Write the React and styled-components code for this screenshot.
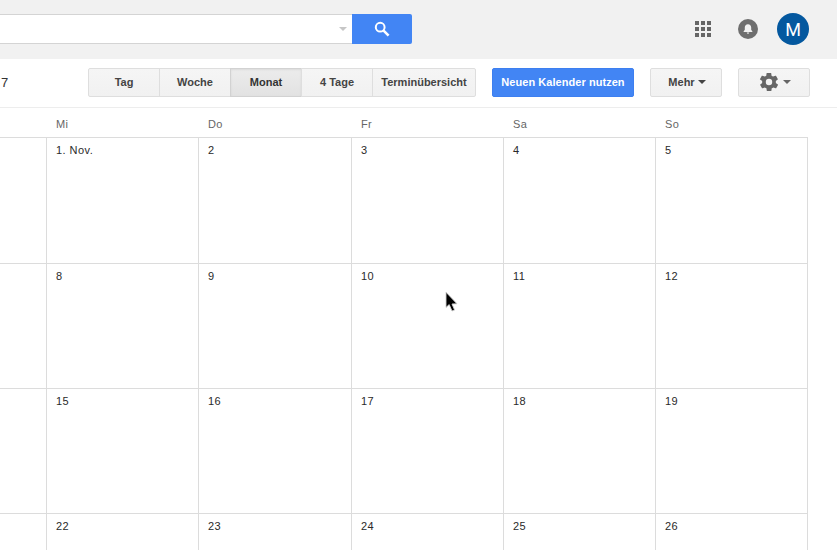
import React from "react";
import styled, { createGlobalStyle } from "styled-components";

const GlobalStyle = createGlobalStyle`
  html, body {
    margin: 0;
    height: 100%;
    overflow: hidden;
    background: #fff;
    font-family: "Liberation Sans", Arial, sans-serif;
  }
`;

const Page = styled.div`
  position: relative;
  width: 837px;
  height: 550px;
  overflow: hidden;
`;

const TopBar = styled.header`
  height: 59px;
  box-sizing: border-box;
  background: #f1f1f1;
  display: flex;
  align-items: flex-start;
  padding: 14px 28px 0 0;
`;

const Search = styled.div`
  width: 412px;
  height: 30px;
  display: flex;
`;

const SearchField = styled.div`
  flex: 1;
  background: #fff;
  border: 1px solid #d4d4d4;
  border-left: none;
  border-right: none;
  display: flex;
  align-items: center;
  justify-content: flex-end;
  padding-right: 5px;
`;

const Caret = styled.span`
  width: 0;
  height: 0;
  border-left: ${(p) => p.$size}px solid transparent;
  border-right: ${(p) => p.$size}px solid transparent;
  border-top: ${(p) => p.$size}px solid ${(p) => p.$color};
  margin-left: ${(p) => p.$gap || 0}px;
`;

const SearchButton = styled.button`
  width: 60px;
  border: none;
  padding: 0;
  background: #4285f4;
  border-radius: 0 2px 2px 0;
  display: flex;
  align-items: center;
  justify-content: center;
`;

const TopActions = styled.div`
  margin-left: auto;
  margin-top: -1px;
  display: flex;
  align-items: center;
  height: 32px;
`;

const Apps = styled.div`
  display: grid;
  grid-template-columns: repeat(3, 4px);
  grid-auto-rows: 4px;
  gap: 2px;
  margin-right: 27px;
`;

const Dot = styled.span`
  background: #666;
`;

const Bell = styled.div`
  width: 20px;
  height: 20px;
  border-radius: 50%;
  background: #6e6e6e;
  display: flex;
  align-items: center;
  justify-content: center;
  margin-right: 19px;
`;

const Avatar = styled.div`
  width: 32px;
  height: 32px;
  border-radius: 50%;
  background: #04589f;
  color: #fff;
  font-family: Roboto, sans-serif;
  font-weight: 400;
  font-size: 18px;
  display: flex;
  align-items: center;
  justify-content: center;
`;

const Toolbar = styled.div`
  height: 49px;
  box-sizing: border-box;
  border-bottom: 1px solid #ededed;
  display: flex;
  align-items: flex-start;
  padding: 9px 0 0 1px;
`;

const DateText = styled.span`
  width: 87px;
  font-size: 13px;
  line-height: 30px;
  color: #333;
`;

const ViewGroup = styled.div`
  display: flex;
  height: 29px;
  margin-right: 16px;
`;

const GrayButton = styled.button`
  box-sizing: border-box;
  height: 29px;
  width: ${(p) => p.$width}px;
  margin: 0;
  padding: 0 0 2px;
  border: 1px solid #dedede;
  border-radius: 2px;
  background: linear-gradient(#f5f5f5, #f1f1f1);
  color: #444;
  font: bold 11px "Liberation Sans", Arial, sans-serif;
  display: flex;
  align-items: center;
  justify-content: center;
`;

const ViewButton = styled(GrayButton)`
  border-radius: 0;
  margin-left: -1px;
  color: ${(p) => (p.$active ? "#333" : "#444")};
  background: ${(p) =>
    p.$active ? "linear-gradient(#ececec, #e2e2e2)" : "linear-gradient(#f5f5f5, #f1f1f1)"};
  border-color: ${(p) => (p.$active ? "#d2d2d2" : "#dedede")};
  box-shadow: ${(p) => (p.$active ? "inset 0 1px 2px rgba(0,0,0,.08)" : "none")};
  &:first-child {
    margin-left: 0;
    border-radius: 2px 0 0 2px;
  }
  &:last-child {
    border-radius: 0 2px 2px 0;
  }
`;

const PrimaryButton = styled.button`
  box-sizing: border-box;
  width: 142px;
  height: 29px;
  padding: 0 0 2px;
  margin-right: 16px;
  border: 1px solid #3d7ff0;
  border-radius: 2px;
  background: #4285f4;
  color: #fff;
  font: bold 11px "Liberation Sans", Arial, sans-serif;
  letter-spacing: 0.05px;
`;

const MoreButton = styled(GrayButton)`
  margin-right: 16px;
  padding-left: 2px;
`;

const WeekHead = styled.div`
  display: grid;
  grid-template-columns: 46px 152px 153px 152px 152px 152px;
  height: 29px;
  width: 807px;
  box-sizing: border-box;
`;

const DayName = styled.div`
  font-size: 11px;
  letter-spacing: 0.4px;
  line-height: 33px;
  padding-left: 10px;
  color: #666;
`;

const Month = styled.div`
  display: grid;
  width: 808px;
  grid-template-columns: 47px 152px 153px 152px 152px 152px;
  grid-template-rows: 126px 125px 125px 125px;
  border-top: 1px solid #dcdcdc;
  box-sizing: border-box;
`;

const Cell = styled.div`
  box-sizing: border-box;
  border-right: 1px solid #dcdcdc;
  border-bottom: 1px solid #dcdcdc;
  padding: 5px 0 0 9px;
  font-size: 11px;
  letter-spacing: 0.45px;
  line-height: 14px;
  color: #2a2a2a;
`;

const Pointer = styled.svg`
  position: absolute;
  left: 444px;
  top: 291px;
`;

const views = [
  ["Tag", 72],
  ["Woche", 72],
  ["Monat", 72],
  ["4 Tage", 72],
  ["Terminübersicht", 104],
];

const days = ["Mi", "Do", "Fr", "Sa", "So"];

const weeks = [
  ["1. Nov.", "2", "3", "4", "5"],
  ["8", "9", "10", "11", "12"],
  ["15", "16", "17", "18", "19"],
  ["22", "23", "24", "25", "26"],
];

export default function App() {
  return (
    <Page>
      <GlobalStyle />
      <TopBar>
        <Search>
          <SearchField>
            <Caret $size={4} $color="#c6c6c6" />
          </SearchField>
          <SearchButton>
            <svg width="16" height="16" viewBox="0 0 16 16" fill="none" stroke="#fff">
              <circle cx="6.2" cy="6.2" r="4.4" strokeWidth="2" />
              <path d="M9.6 9.6 L14.6 14.6" strokeWidth="2.6" />
            </svg>
          </SearchButton>
        </Search>
        <TopActions>
          <Apps>
            {Array.from({ length: 9 }, (_, i) => (
              <Dot key={i} />
            ))}
          </Apps>
          <Bell>
            <svg width="12" height="12" viewBox="0 0 12 12" fill="#f1f1f1">
              <path d="M6 1.2c-2 0-3.2 1.5-3.2 3.4v2.2L1.6 8.4v.6h8.8v-.6L9.2 6.8V4.6C9.2 2.7 8 1.2 6 1.2zM4.8 9.6a1.2 1.2 0 0 0 2.4 0z" />
            </svg>
          </Bell>
          <Avatar>M</Avatar>
        </TopActions>
      </TopBar>
      <Toolbar>
        <DateText>7</DateText>
        <ViewGroup>
          {views.map(([label, width]) => (
            <ViewButton key={label} $width={width} $active={label === "Monat"}>
              {label}
            </ViewButton>
          ))}
        </ViewGroup>
        <PrimaryButton>Neuen Kalender nutzen</PrimaryButton>
        <MoreButton $width={72}>
          Mehr
          <Caret $size={4} $color="#444" $gap={3} />
        </MoreButton>
        <GrayButton $width={72}>
          <svg width="22" height="22" viewBox="0 0 24 24" fill="#666">
            <path d="M19.4 13c.1-.3.1-.7.1-1s0-.7-.1-1l2.1-1.6c.2-.2.2-.4.1-.6l-2-3.5c-.1-.2-.4-.3-.6-.2l-2.5 1c-.5-.4-1.1-.7-1.7-1l-.4-2.6c0-.3-.2-.4-.5-.4h-4c-.3 0-.5.1-.5.4l-.4 2.6c-.6.3-1.2.6-1.7 1l-2.5-1c-.2-.1-.5 0-.6.2l-2 3.5c-.1.2-.1.4.1.6L4.6 11c-.1.3-.1.7-.1 1s0 .7.1 1l-2.1 1.6c-.2.2-.2.4-.1.6l2 3.5c.1.2.4.3.6.2l2.5-1c.5.4 1.1.7 1.7 1l.4 2.6c0 .3.2.4.5.4h4c.3 0 .5-.1.5-.4l.4-2.6c.6-.3 1.2-.6 1.7-1l2.5 1c.2.1.5 0 .6-.2l2-3.5c.1-.2.1-.4-.1-.6L19.4 13zM12 15.5a3.5 3.5 0 1 1 0-7 3.5 3.5 0 0 1 0 7z" />
          </svg>
          <Caret $size={4} $color="#666" $gap={3} />
        </GrayButton>
      </Toolbar>
      <WeekHead>
        <div />
        {days.map((d) => (
          <DayName key={d}>{d}</DayName>
        ))}
      </WeekHead>
      <Month>
        {weeks.map((week, w) => (
          <React.Fragment key={w}>
            <Cell />
            {week.map((d) => (
              <Cell key={d}>{d}</Cell>
            ))}
          </React.Fragment>
        ))}
      </Month>
      <Pointer width="15" height="22" viewBox="0 0 15 22">
        <path d="M2 1.2 L2 16.4 L5.2 13.6 L8 20 L10.6 19 L8 13 L13 12.8 Z" fill="#000" stroke="#d0d0d0" strokeWidth="0.9" />
      </Pointer>
    </Page>
  );
}
